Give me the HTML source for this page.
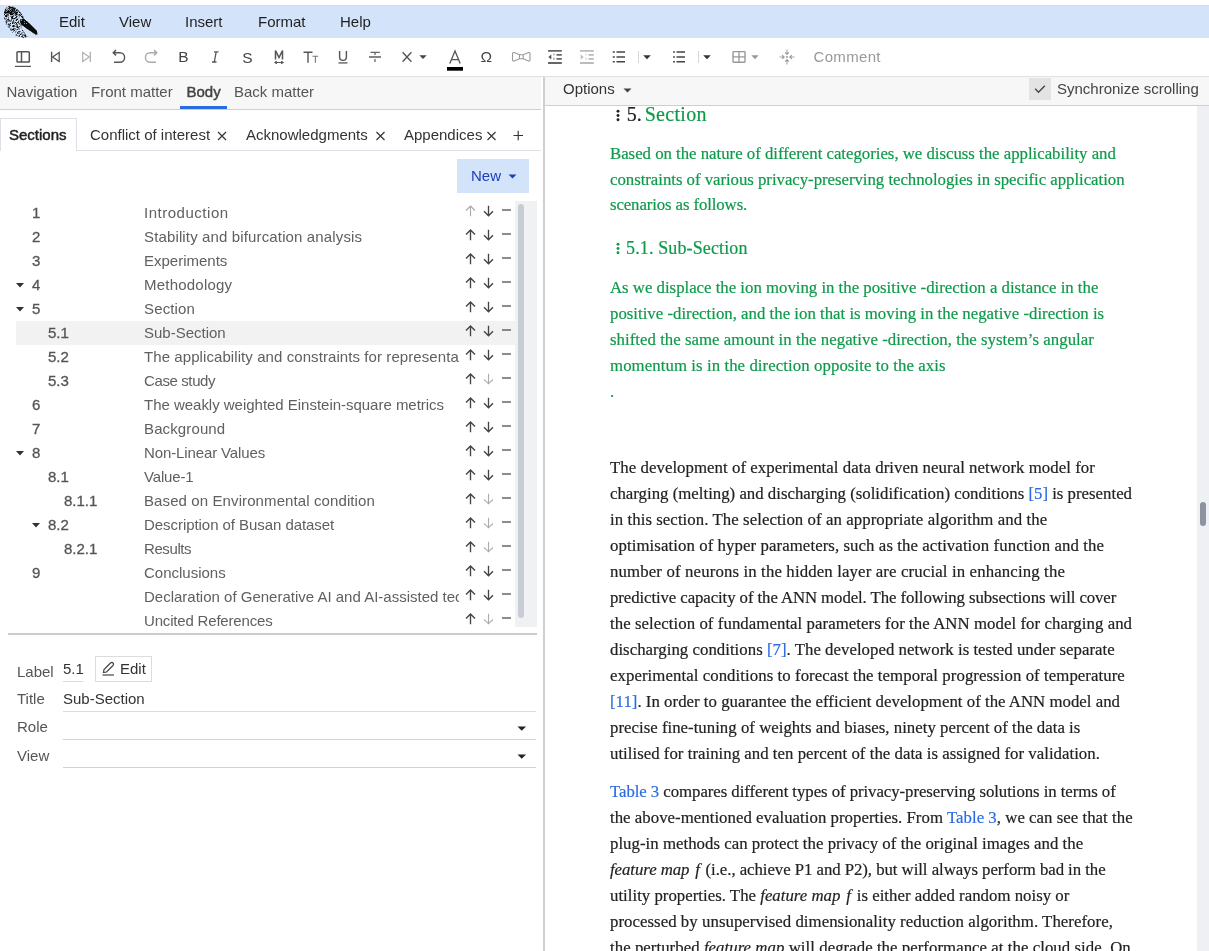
<!DOCTYPE html>
<html><head><meta charset="utf-8">
<style>
*{box-sizing:border-box;margin:0;padding:0}
html,body{width:1209px;height:951px;overflow:hidden;background:#fff}
#left,#right,#menu,#tb{will-change:transform}
body{position:relative;font-family:"Liberation Sans",sans-serif;font-size:15px;color:#333}
.a{position:absolute;white-space:nowrap}
#top{position:absolute;left:0;top:5px;width:1209px;height:1px;background:#d9dcdd}
#menu{position:absolute;left:0;top:6px;width:1209px;height:32px;background:#d3e4fa}
#menu .m{position:absolute;top:-0.5px;line-height:32px;color:#1f1f1f;font-size:15px}
#tb{position:absolute;left:0;top:38px;width:1209px;height:39px;border-bottom:1px solid #dfe1e5;background:#fff}
#left{position:absolute;left:0;top:77px;width:543px;height:874px;background:#fff}
#divider{position:absolute;left:543px;top:77px;width:2px;height:874px;background:#cfcfcf}
#right{position:absolute;left:545px;top:77px;width:664px;height:874px;background:#fff}
#nav{position:absolute;left:0;top:0;width:541px;height:33px;background:#f7f7f7;border-bottom:1px solid #cfcfcf}
#nav .t{position:absolute;top:-1.5px;line-height:32px;color:#555}
#opts{position:absolute;left:0;top:0;width:664px;height:29px;background:#f7f7f7;border-bottom:1px solid #cfcfcf}
.doc{font-family:"Liberation Serif",serif;font-size:16.8px;color:#222;line-height:26px;-webkit-text-stroke:0.2px}
.doc .l{position:absolute;left:65px;white-space:nowrap}
.g{color:#0e9a4a}
.lk{color:#2b6be3}
.row{position:absolute;left:16px;width:500px;height:24px}
.row .n{position:absolute;top:0;line-height:24px;color:#555;font-size:15px;-webkit-text-stroke:0.3px #555}
.row .ti{position:absolute;left:128px;top:0;line-height:24px;color:#606060;width:315px;overflow:hidden;white-space:nowrap}
.row .ic{position:absolute;left:449px;top:3px}
</style></head><body>
<div id="top"></div>
<div id="menu">
  <svg class="a" style="left:0;top:-6px" width="40" height="40" viewBox="0 0 40 40"><path d="M13 6h1v1h-1zM7 7h1v1h-1zM8 7h1v1h-1zM15 7h1v1h-1zM5 8h1v1h-1zM7 8h1v1h-1zM6 9h1v1h-1zM8 9h1v1h-1zM15 9h1v1h-1zM4 10h1v1h-1zM21 13h1v1h-1zM13 14h1v1h-1zM4 15h1v1h-1zM10 15h1v1h-1zM11 15h1v1h-1zM12 15h1v1h-1zM14 15h1v1h-1zM17 15h1v1h-1zM21 15h1v1h-1zM22 15h1v1h-1zM8 16h1v1h-1zM23 16h1v1h-1zM18 17h1v1h-1zM19 17h1v1h-1zM21 17h1v1h-1zM16 18h1v1h-1zM18 18h1v1h-1zM4 19h1v1h-1zM6 19h1v1h-1zM9 19h1v1h-1zM12 19h1v1h-1zM13 19h1v1h-1zM14 19h1v1h-1zM18 20h1v1h-1zM19 20h1v1h-1zM11 21h1v1h-1zM14 21h1v1h-1zM5 22h1v1h-1zM7 22h1v1h-1zM16 22h1v1h-1zM9 23h1v1h-1zM7 24h1v1h-1zM10 24h1v1h-1zM7 26h1v1h-1zM18 26h1v1h-1zM20 26h1v1h-1zM21 26h1v1h-1zM23 26h1v1h-1zM13 27h1v1h-1zM20 27h1v1h-1zM21 27h1v1h-1zM11 28h1v1h-1zM21 28h1v1h-1zM14 29h1v1h-1zM18 29h1v1h-1zM27 29h1v1h-1zM10 30h1v1h-1zM12 30h1v1h-1zM16 30h1v1h-1zM16 31h1v1h-1zM30 31h1v1h-1zM21 32h1v1h-1zM37 32h1v1h-1zM20 33h1v1h-1zM22 33h1v1h-1zM33 33h1v1h-1zM15 34h1v1h-1zM19 34h1v1h-1zM37 34h1v1h-1zM15 35h1v1h-1zM18 35h1v1h-1zM27 36h1v1h-1z" fill="#000" fill-opacity="0.19"/><path d="M10 6h1v1h-1zM12 6h1v1h-1zM6 7h1v1h-1zM14 7h1v1h-1zM6 8h1v1h-1zM10 9h1v1h-1zM7 10h1v1h-1zM9 10h1v1h-1zM15 10h1v1h-1zM6 11h1v1h-1zM16 11h1v1h-1zM17 11h1v1h-1zM19 11h1v1h-1zM13 12h1v1h-1zM4 13h1v1h-1zM7 13h1v1h-1zM14 13h1v1h-1zM17 13h1v1h-1zM6 14h1v1h-1zM14 14h1v1h-1zM18 14h1v1h-1zM20 14h1v1h-1zM16 15h1v1h-1zM18 15h1v1h-1zM7 16h1v1h-1zM10 16h1v1h-1zM17 16h1v1h-1zM19 16h1v1h-1zM4 17h1v1h-1zM6 17h1v1h-1zM23 17h1v1h-1zM5 18h1v1h-1zM6 18h1v1h-1zM8 18h1v1h-1zM17 18h1v1h-1zM22 18h1v1h-1zM5 19h1v1h-1zM7 20h1v1h-1zM10 20h1v1h-1zM15 20h1v1h-1zM21 20h1v1h-1zM5 21h1v1h-1zM7 21h1v1h-1zM8 21h1v1h-1zM9 21h1v1h-1zM12 21h1v1h-1zM24 21h1v1h-1zM27 21h1v1h-1zM14 22h1v1h-1zM28 22h1v1h-1zM8 23h1v1h-1zM13 23h1v1h-1zM18 23h1v1h-1zM20 23h1v1h-1zM24 23h1v1h-1zM26 23h1v1h-1zM6 24h1v1h-1zM15 24h1v1h-1zM19 24h1v1h-1zM20 24h1v1h-1zM8 25h1v1h-1zM12 25h1v1h-1zM16 25h1v1h-1zM20 25h1v1h-1zM21 25h1v1h-1zM8 26h1v1h-1zM15 26h1v1h-1zM8 27h1v1h-1zM16 27h1v1h-1zM10 28h1v1h-1zM15 28h1v1h-1zM19 28h1v1h-1zM15 29h1v1h-1zM16 29h1v1h-1zM19 29h1v1h-1zM13 30h1v1h-1zM13 31h1v1h-1zM15 31h1v1h-1zM20 31h1v1h-1zM23 31h1v1h-1zM12 32h1v1h-1zM15 32h1v1h-1zM18 32h1v1h-1zM19 32h1v1h-1zM22 32h1v1h-1zM23 32h1v1h-1zM24 32h1v1h-1zM19 33h1v1h-1zM24 33h1v1h-1zM37 33h1v1h-1zM21 34h1v1h-1zM22 34h1v1h-1zM23 34h1v1h-1zM24 34h1v1h-1zM17 35h1v1h-1zM23 35h1v1h-1zM18 36h1v1h-1zM24 36h1v1h-1zM22 37h1v1h-1zM25 37h1v1h-1z" fill="#000" fill-opacity="0.38"/><path d="M8 6h1v1h-1zM13 7h1v1h-1zM10 8h1v1h-1zM11 8h1v1h-1zM7 9h1v1h-1zM16 9h1v1h-1zM17 9h1v1h-1zM11 10h1v1h-1zM17 10h1v1h-1zM18 10h1v1h-1zM4 11h1v1h-1zM10 11h1v1h-1zM18 11h1v1h-1zM12 12h1v1h-1zM20 12h1v1h-1zM6 13h1v1h-1zM8 13h1v1h-1zM20 13h1v1h-1zM8 14h1v1h-1zM15 14h1v1h-1zM17 14h1v1h-1zM7 15h1v1h-1zM8 15h1v1h-1zM13 15h1v1h-1zM19 15h1v1h-1zM11 16h1v1h-1zM13 16h1v1h-1zM8 17h1v1h-1zM11 18h1v1h-1zM15 18h1v1h-1zM23 18h1v1h-1zM11 19h1v1h-1zM21 19h1v1h-1zM8 20h1v1h-1zM11 20h1v1h-1zM6 21h1v1h-1zM10 21h1v1h-1zM13 21h1v1h-1zM13 22h1v1h-1zM6 23h1v1h-1zM14 23h1v1h-1zM19 23h1v1h-1zM29 23h1v1h-1zM16 24h1v1h-1zM17 24h1v1h-1zM30 24h1v1h-1zM9 25h1v1h-1zM14 25h1v1h-1zM17 25h1v1h-1zM22 25h1v1h-1zM31 25h1v1h-1zM9 26h1v1h-1zM14 26h1v1h-1zM16 26h1v1h-1zM32 26h1v1h-1zM9 27h1v1h-1zM33 27h1v1h-1zM14 28h1v1h-1zM18 28h1v1h-1zM26 28h1v1h-1zM34 28h1v1h-1zM10 29h1v1h-1zM11 29h1v1h-1zM35 29h1v1h-1zM11 30h1v1h-1zM29 30h1v1h-1zM36 30h1v1h-1zM32 32h1v1h-1zM18 33h1v1h-1zM21 33h1v1h-1zM16 34h1v1h-1zM25 34h1v1h-1zM35 34h1v1h-1zM36 34h1v1h-1zM16 35h1v1h-1zM22 35h1v1h-1zM19 36h1v1h-1zM26 36h1v1h-1z" fill="#000" fill-opacity="0.57"/><path d="M9 6h1v1h-1zM8 8h1v1h-1zM9 8h1v1h-1zM12 8h1v1h-1zM15 8h1v1h-1zM9 9h1v1h-1zM11 9h1v1h-1zM13 9h1v1h-1zM5 10h1v1h-1zM6 10h1v1h-1zM13 10h1v1h-1zM5 11h1v1h-1zM13 11h1v1h-1zM14 11h1v1h-1zM15 11h1v1h-1zM9 12h1v1h-1zM15 12h1v1h-1zM5 13h1v1h-1zM9 13h1v1h-1zM12 13h1v1h-1zM7 14h1v1h-1zM5 15h1v1h-1zM15 15h1v1h-1zM20 15h1v1h-1zM22 16h1v1h-1zM15 17h1v1h-1zM16 17h1v1h-1zM4 18h1v1h-1zM13 18h1v1h-1zM7 19h1v1h-1zM16 19h1v1h-1zM20 19h1v1h-1zM24 19h1v1h-1zM6 20h1v1h-1zM9 20h1v1h-1zM13 20h1v1h-1zM20 20h1v1h-1zM18 21h1v1h-1zM6 22h1v1h-1zM12 22h1v1h-1zM17 22h1v1h-1zM18 22h1v1h-1zM20 22h1v1h-1zM8 24h1v1h-1zM9 24h1v1h-1zM21 24h1v1h-1zM10 25h1v1h-1zM12 26h1v1h-1zM19 26h1v1h-1zM18 27h1v1h-1zM25 27h1v1h-1zM13 28h1v1h-1zM17 29h1v1h-1zM28 29h1v1h-1zM18 31h1v1h-1zM19 31h1v1h-1zM31 31h1v1h-1zM17 32h1v1h-1zM17 33h1v1h-1zM34 33h1v1h-1zM19 35h1v1h-1zM24 35h1v1h-1zM21 36h1v1h-1zM22 36h1v1h-1zM25 36h1v1h-1zM23 37h1v1h-1z" fill="#000" fill-opacity="0.76"/><path d="M9 7h1v1h-1zM10 7h1v1h-1zM11 7h1v1h-1zM12 7h1v1h-1zM13 8h1v1h-1zM14 8h1v1h-1zM5 9h1v1h-1zM12 9h1v1h-1zM14 9h1v1h-1zM8 10h1v1h-1zM10 10h1v1h-1zM12 10h1v1h-1zM14 10h1v1h-1zM16 10h1v1h-1zM7 11h1v1h-1zM8 11h1v1h-1zM9 11h1v1h-1zM11 11h1v1h-1zM12 11h1v1h-1zM4 12h1v1h-1zM5 12h1v1h-1zM6 12h1v1h-1zM7 12h1v1h-1zM8 12h1v1h-1zM10 12h1v1h-1zM11 12h1v1h-1zM14 12h1v1h-1zM16 12h1v1h-1zM17 12h1v1h-1zM19 12h1v1h-1zM10 13h1v1h-1zM11 13h1v1h-1zM13 13h1v1h-1zM15 13h1v1h-1zM16 13h1v1h-1zM4 14h1v1h-1zM10 14h1v1h-1zM11 14h1v1h-1zM12 14h1v1h-1zM16 14h1v1h-1zM19 14h1v1h-1zM21 14h1v1h-1zM6 15h1v1h-1zM5 16h1v1h-1zM6 16h1v1h-1zM12 16h1v1h-1zM16 16h1v1h-1zM21 16h1v1h-1zM11 17h1v1h-1zM12 17h1v1h-1zM22 17h1v1h-1zM12 18h1v1h-1zM14 18h1v1h-1zM8 19h1v1h-1zM17 19h1v1h-1zM22 19h1v1h-1zM23 19h1v1h-1zM16 20h1v1h-1zM22 20h1v1h-1zM23 20h1v1h-1zM24 20h1v1h-1zM25 20h1v1h-1zM20 21h1v1h-1zM21 21h1v1h-1zM22 21h1v1h-1zM23 21h1v1h-1zM25 21h1v1h-1zM26 21h1v1h-1zM15 22h1v1h-1zM21 22h1v1h-1zM22 22h1v1h-1zM23 22h1v1h-1zM24 22h1v1h-1zM25 22h1v1h-1zM26 22h1v1h-1zM27 22h1v1h-1zM10 23h1v1h-1zM12 23h1v1h-1zM16 23h1v1h-1zM21 23h1v1h-1zM22 23h1v1h-1zM23 23h1v1h-1zM25 23h1v1h-1zM27 23h1v1h-1zM28 23h1v1h-1zM22 24h1v1h-1zM23 24h1v1h-1zM24 24h1v1h-1zM25 24h1v1h-1zM26 24h1v1h-1zM27 24h1v1h-1zM28 24h1v1h-1zM29 24h1v1h-1zM13 25h1v1h-1zM23 25h1v1h-1zM24 25h1v1h-1zM25 25h1v1h-1zM26 25h1v1h-1zM27 25h1v1h-1zM28 25h1v1h-1zM29 25h1v1h-1zM30 25h1v1h-1zM13 26h1v1h-1zM17 26h1v1h-1zM24 26h1v1h-1zM25 26h1v1h-1zM26 26h1v1h-1zM27 26h1v1h-1zM28 26h1v1h-1zM29 26h1v1h-1zM30 26h1v1h-1zM31 26h1v1h-1zM17 27h1v1h-1zM26 27h1v1h-1zM27 27h1v1h-1zM28 27h1v1h-1zM29 27h1v1h-1zM30 27h1v1h-1zM31 27h1v1h-1zM32 27h1v1h-1zM27 28h1v1h-1zM28 28h1v1h-1zM29 28h1v1h-1zM30 28h1v1h-1zM31 28h1v1h-1zM32 28h1v1h-1zM33 28h1v1h-1zM12 29h1v1h-1zM13 29h1v1h-1zM29 29h1v1h-1zM30 29h1v1h-1zM31 29h1v1h-1zM32 29h1v1h-1zM33 29h1v1h-1zM34 29h1v1h-1zM14 30h1v1h-1zM22 30h1v1h-1zM30 30h1v1h-1zM31 30h1v1h-1zM32 30h1v1h-1zM33 30h1v1h-1zM34 30h1v1h-1zM35 30h1v1h-1zM32 31h1v1h-1zM33 31h1v1h-1zM34 31h1v1h-1zM35 31h1v1h-1zM36 31h1v1h-1zM33 32h1v1h-1zM34 32h1v1h-1zM35 32h1v1h-1zM36 32h1v1h-1zM35 33h1v1h-1zM36 33h1v1h-1zM20 34h1v1h-1zM25 35h1v1h-1z" fill="#000" fill-opacity="0.95"/></svg>
  <div class="m" style="left:59px">Edit</div>
  <div class="m" style="left:119px">View</div>
  <div class="m" style="left:185px">Insert</div>
  <div class="m" style="left:258px">Format</div>
  <div class="m" style="left:340px">Help</div>
</div>
<div id="tb">
  <svg class="a" style="left:0;top:0" width="900" height="38" viewBox="0 38 900 38">
   <g fill="none" stroke="#555" stroke-width="1.5">
    <rect x="17" y="51.8" width="12.3" height="10.3" rx="0.8"/>
    <path d="M21.5 51.8V62.1"/>
    <path d="M15 66.4H31" stroke-width="1.2"/>
    <path d="M51.6 51.7V62.1" stroke-width="1.4"/>
    <path d="M59.2 52.4V61.6L52.6 57Z" stroke-width="1.3" stroke-linejoin="miter"/>
    <path d="M90.3 51.7V62.1" stroke="#b5b5b5" stroke-width="1.4"/>
    <path d="M82.7 52.4V61.6L89.3 57Z" stroke="#b5b5b5" stroke-width="1.3"/>
    <path d="M114 62.3H119.8A4.8 4.8 0 0 0 119.8 52.7H113.5" stroke-width="1.4"/>
    <path d="M116 50L113.3 52.7L116 55.4" stroke-width="1.5"/>
    <path d="M156 62.3H150.2A4.8 4.8 0 0 1 150.2 52.7H156.5" stroke="#aaa" stroke-width="1.4"/>
    <path d="M154 50L156.7 52.7L154 55.4" stroke="#aaa" stroke-width="1.5"/>
    <path d="M212 62H216.5M214 51.8H218.5M216.2 51.8L214.3 62" stroke-width="1.3"/>
    <path d="M275.5 59.6V50.5L279 57.5L282.5 50.5V59.6" stroke-width="1.5" stroke-linejoin="miter"/>
    <path d="M275.5 62.5H282.5M276.8 61.2L275 62.5L276.8 63.8M281.2 61.2L283 62.5L281.2 63.8" stroke-width="1.2"/>
    <path d="M303.5 52.3H312.5M308 52.3V62.8" stroke-width="1.4"/>
    <path d="M312.5 56.3H318.2M315.4 56.3V62.8" stroke-width="1.1" stroke="#777"/>
    <path d="M339.6 50.9V56.8C339.6 59.3 341 60.4 343 60.4C345 60.4 346.4 59.3 346.4 56.8V50.9" stroke-width="1.4"/>
    <path d="M338.5 62.9H347.5" stroke-width="1.6" stroke="#777"/>
    <path d="M369 57H381" stroke-width="1.6" stroke="#666"/>
    <path d="M370.5 52.4H379.8M375 52.4V55M375 59V62" stroke-width="1.3" stroke="#666"/>
    <path d="M402.6 52.2L411.4 61.8M411.4 52.2L402.6 61.8" stroke-width="1.3"/>
    <path d="M449.8 63.4L455 51L460.2 63.4M451.6 59.6H458.4" stroke-width="1.3"/>
    <path d="M512.5 53.8C512.5 52.8 513.3 52.3 514.2 52.6L519.5 54.8H523.2L528.5 52.6C529.4 52.3 530 52.8 530 53.8V59.8C530 60.8 529.4 61.3 528.5 61L523.2 58.8H519.5L514.2 61C513.3 61.3 512.5 60.8 512.5 59.8Z M519.5 54.8V58.8M523.2 54.8V58.8" stroke="#999" stroke-width="1.1"/>
    <path d="M548 50.9H561.8M556.5 54.8H561.8M556.5 58.9H561.8M548 63H561.8" stroke-width="1.8" stroke="#666"/>
    <path d="M554 53.5V55.5M554 57.5V60" stroke-width="1" stroke="#888"/>
    <path d="M580 50.9H593.8M588.5 54.8H593.8M588.5 58.9H593.8M580 63H593.8" stroke-width="1.8" stroke="#bbb"/>
    <path d="M586 53.5V55.5M586 57.5V60" stroke-width="1" stroke="#ccc"/>
    <path d="M616.5 52H625M616.5 57H625M616.5 61.7H625" stroke-width="1.5" stroke="#444"/>
    <path d="M612.8 52H614.8M612.8 57H614.8M612.8 61.7H614.8" stroke-width="1.5" stroke="#444"/>
    <path d="M638.5 51V63" stroke="#d4d6dc" stroke-width="1"/>
    <path d="M676.5 52H685M676.5 57H685M676.5 61.7H685" stroke-width="1.5" stroke="#444"/>
    <path d="M673 52H675M673 57H675M673 61.7H675" stroke-width="1.5" stroke="#555"/>
    <path d="M698.5 51V63" stroke="#d4d6dc" stroke-width="1"/>
    <rect x="733" y="51.6" width="12" height="10.6" rx="0.6" stroke="#999" stroke-width="1.4"/>
    <path d="M739 51.6V62.2M733 56.9H745" stroke="#999" stroke-width="1.3"/>
    <path d="M787 49.5V54M787 60V64.5M779.5 57H784M790 57H794.5" stroke="#aaa" stroke-width="1.1"/>
    <path d="M785.3 52.4L787 54.2L788.7 52.4M785.3 61.6L787 59.8L788.7 61.6M782.2 55.3L784 57L782.2 58.7M791.8 55.3L790 57L791.8 58.7" stroke="#999" stroke-width="1.3"/>
   </g>
   <path d="M548.3 57L551.3 54.5V59.5Z" fill="#555"/>
   <path d="M583.7 57L580.7 54.5V59.5Z" fill="#bbb"/>
   <rect x="786.2" y="56.2" width="1.6" height="1.6" fill="#888"/>
   <path d="M419.3 55.2H426.7L423 59Z" fill="#444"/>
   <path d="M643.2 55.3H650.8L647 59.2Z" fill="#333"/>
   <path d="M703.2 55.3H710.8L707 59.2Z" fill="#333"/>
   <path d="M751.3 55.3H758.7L755 59.2Z" fill="#999"/>
   <rect x="447" y="67" width="16" height="3.7" fill="#000"/>
   <text x="178.3" y="62.4" font-family="Liberation Sans" font-size="15.5" fill="#444">B</text>
   <text x="242.2" y="62.5" font-family="Liberation Sans" font-size="15.5" fill="#444">S</text>
   <text x="480.6" y="62.4" font-family="Liberation Sans" font-size="15.5" fill="#444">&#937;</text>
   <text x="813.5" y="61.9" font-family="Liberation Sans" font-size="15" fill="#999" letter-spacing="0.33">Comment</text>
  </svg>
</div>
<div id="left">
  <div id="nav">
    <div class="t" style="left:6.5px">Navigation</div>
    <div class="t" style="left:91px">Front matter</div>
    <div class="t" style="left:186.5px;color:#444;-webkit-text-stroke:0.45px #444">Body</div>
    <div class="a" style="left:180px;top:29px;width:47px;height:3px;background:#2a6de0"></div>
    <div class="t" style="left:234px">Back matter</div>
  </div>
  <!-- section tabs -->
  <div class="a" style="left:0;top:73px;width:541px;height:1px;background:#dde0e6"></div>
  <div class="a" style="left:0;top:41px;width:77px;height:33px;border:1px solid #dde0e6;border-bottom:none;background:#fff"></div>
  <div class="a" style="left:9px;top:45.5px;line-height:24px;color:#222;-webkit-text-stroke:0.45px #222">Sections</div>
  <div class="a" style="left:90px;top:45.5px;line-height:24px;color:#333">Conflict of interest</div>
  <div class="a" style="left:246px;top:45.5px;line-height:24px;color:#333">Acknowledgments</div>
  <div class="a" style="left:404px;top:45.5px;line-height:24px;color:#333">Appendices</div>
  <svg class="a" style="left:0;top:40px" width="541" height="30" viewBox="0 0 541 30"><g stroke="#333" stroke-width="1.15" fill="none">
   <path d="M218 15L226 23M226 15L218 23"/>
   <path d="M376.5 15L384.5 23M384.5 15L376.5 23"/>
   <path d="M487.5 15L495.5 23M495.5 15L487.5 23"/>
   <path d="M513.5 18.5H523M518.2 13.8V23.2"/>
  </g></svg>
  <!-- New button -->
  <div class="a" style="left:457px;top:82px;width:72px;height:34px;background:#d3e4fa"></div>
  <div class="a" style="left:471px;top:87px;line-height:24px;color:#1a3fb8">New</div>
  <svg class="a" style="left:508px;top:97px" width="9" height="6"><path d="M0.5 0.5H8.5L4.5 4.5Z" fill="#1a3fb8"/></svg>
  <!-- scrollbar -->
  <div class="a" style="left:515px;top:124px;width:22px;height:426px;background:#f0f1f3"></div>
  <div class="a" style="left:518px;top:127px;width:6px;height:414px;border-radius:3px;background:#c8ccd4"></div>
<div class="row" style="top:124px;"><div class="n" style="left:16px">1</div><div class="ti" style="letter-spacing:0.518px">Introduction</div><svg class="ic" width="70" height="16" viewBox="0 0 70 16"><g fill="none" stroke-width="1.35"><path d="M5.5 2V12.3M1 6.5L5.5 2L10 6.5" stroke="#aaa" stroke-width="1.1"/><path d="M23.5 1.7V11.8M19 7.3L23.5 11.8L28 7.3" stroke="#444" stroke-width="1.35"/><path d="M37 6H46" stroke="#555"/></g></svg></div>
<div class="row" style="top:148px;"><div class="n" style="left:16px">2</div><div class="ti" style="letter-spacing:0.139px">Stability and bifurcation analysis</div><svg class="ic" width="70" height="16" viewBox="0 0 70 16"><g fill="none" stroke-width="1.35"><path d="M5.5 2V12.3M1 6.5L5.5 2L10 6.5" stroke="#444" stroke-width="1.35"/><path d="M23.5 1.7V11.8M19 7.3L23.5 11.8L28 7.3" stroke="#444" stroke-width="1.35"/><path d="M37 6H46" stroke="#555"/></g></svg></div>
<div class="row" style="top:172px;"><div class="n" style="left:16px">3</div><div class="ti">Experiments</div><svg class="ic" width="70" height="16" viewBox="0 0 70 16"><g fill="none" stroke-width="1.35"><path d="M5.5 2V12.3M1 6.5L5.5 2L10 6.5" stroke="#444" stroke-width="1.35"/><path d="M23.5 1.7V11.8M19 7.3L23.5 11.8L28 7.3" stroke="#444" stroke-width="1.35"/><path d="M37 6H46" stroke="#555"/></g></svg></div>
<div class="row" style="top:196px;"><svg class="a" style="left:0px;top:10px" width="8" height="5"><path d="M0 0H8L4 4.5Z" fill="#333"/></svg><div class="n" style="left:16px">4</div><div class="ti" style="letter-spacing:0.220px">Methodology</div><svg class="ic" width="70" height="16" viewBox="0 0 70 16"><g fill="none" stroke-width="1.35"><path d="M5.5 2V12.3M1 6.5L5.5 2L10 6.5" stroke="#444" stroke-width="1.35"/><path d="M23.5 1.7V11.8M19 7.3L23.5 11.8L28 7.3" stroke="#444" stroke-width="1.35"/><path d="M37 6H46" stroke="#555"/></g></svg></div>
<div class="row" style="top:220px;"><svg class="a" style="left:0px;top:10px" width="8" height="5"><path d="M0 0H8L4 4.5Z" fill="#333"/></svg><div class="n" style="left:16px">5</div><div class="ti" style="letter-spacing:0.150px">Section</div><svg class="ic" width="70" height="16" viewBox="0 0 70 16"><g fill="none" stroke-width="1.35"><path d="M5.5 2V12.3M1 6.5L5.5 2L10 6.5" stroke="#444" stroke-width="1.35"/><path d="M23.5 1.7V11.8M19 7.3L23.5 11.8L28 7.3" stroke="#444" stroke-width="1.35"/><path d="M37 6H46" stroke="#555"/></g></svg></div>
<div class="row" style="top:244px;background:#f2f2f2;"><div class="n" style="left:32px">5.1</div><div class="ti">Sub-Section</div><svg class="ic" width="70" height="16" viewBox="0 0 70 16"><g fill="none" stroke-width="1.35"><path d="M5.5 2V12.3M1 6.5L5.5 2L10 6.5" stroke="#444" stroke-width="1.35"/><path d="M23.5 1.7V11.8M19 7.3L23.5 11.8L28 7.3" stroke="#444" stroke-width="1.35"/><path d="M37 6H46" stroke="#555"/></g></svg></div>
<div class="row" style="top:268px;"><div class="n" style="left:32px">5.2</div><div class="ti" style="letter-spacing:0.08px">The applicability and constraints for representation</div><svg class="ic" width="70" height="16" viewBox="0 0 70 16"><g fill="none" stroke-width="1.35"><path d="M5.5 2V12.3M1 6.5L5.5 2L10 6.5" stroke="#444" stroke-width="1.35"/><path d="M23.5 1.7V11.8M19 7.3L23.5 11.8L28 7.3" stroke="#444" stroke-width="1.35"/><path d="M37 6H46" stroke="#555"/></g></svg></div>
<div class="row" style="top:292px;"><div class="n" style="left:32px">5.3</div><div class="ti" style="letter-spacing:-0.389px">Case study</div><svg class="ic" width="70" height="16" viewBox="0 0 70 16"><g fill="none" stroke-width="1.35"><path d="M5.5 2V12.3M1 6.5L5.5 2L10 6.5" stroke="#444" stroke-width="1.35"/><path d="M23.5 1.7V11.8M19 7.3L23.5 11.8L28 7.3" stroke="#aaa" stroke-width="1.1"/><path d="M37 6H46" stroke="#555"/></g></svg></div>
<div class="row" style="top:316px;"><div class="n" style="left:16px">6</div><div class="ti" style="letter-spacing:-0.021px">The weakly weighted Einstein-square metrics</div><svg class="ic" width="70" height="16" viewBox="0 0 70 16"><g fill="none" stroke-width="1.35"><path d="M5.5 2V12.3M1 6.5L5.5 2L10 6.5" stroke="#444" stroke-width="1.35"/><path d="M23.5 1.7V11.8M19 7.3L23.5 11.8L28 7.3" stroke="#444" stroke-width="1.35"/><path d="M37 6H46" stroke="#555"/></g></svg></div>
<div class="row" style="top:340px;"><div class="n" style="left:16px">7</div><div class="ti" style="letter-spacing:0.122px">Background</div><svg class="ic" width="70" height="16" viewBox="0 0 70 16"><g fill="none" stroke-width="1.35"><path d="M5.5 2V12.3M1 6.5L5.5 2L10 6.5" stroke="#444" stroke-width="1.35"/><path d="M23.5 1.7V11.8M19 7.3L23.5 11.8L28 7.3" stroke="#444" stroke-width="1.35"/><path d="M37 6H46" stroke="#555"/></g></svg></div>
<div class="row" style="top:364px;"><svg class="a" style="left:0px;top:10px" width="8" height="5"><path d="M0 0H8L4 4.5Z" fill="#333"/></svg><div class="n" style="left:16px">8</div><div class="ti" style="letter-spacing:-0.119px">Non-Linear Values</div><svg class="ic" width="70" height="16" viewBox="0 0 70 16"><g fill="none" stroke-width="1.35"><path d="M5.5 2V12.3M1 6.5L5.5 2L10 6.5" stroke="#444" stroke-width="1.35"/><path d="M23.5 1.7V11.8M19 7.3L23.5 11.8L28 7.3" stroke="#444" stroke-width="1.35"/><path d="M37 6H46" stroke="#555"/></g></svg></div>
<div class="row" style="top:388px;"><div class="n" style="left:32px">8.1</div><div class="ti" style="letter-spacing:-0.167px">Value-1</div><svg class="ic" width="70" height="16" viewBox="0 0 70 16"><g fill="none" stroke-width="1.35"><path d="M5.5 2V12.3M1 6.5L5.5 2L10 6.5" stroke="#444" stroke-width="1.35"/><path d="M23.5 1.7V11.8M19 7.3L23.5 11.8L28 7.3" stroke="#444" stroke-width="1.35"/><path d="M37 6H46" stroke="#555"/></g></svg></div>
<div class="row" style="top:412px;"><div class="n" style="left:48px">8.1.1</div><div class="ti" style="letter-spacing:0.103px">Based on Environmental condition</div><svg class="ic" width="70" height="16" viewBox="0 0 70 16"><g fill="none" stroke-width="1.35"><path d="M5.5 2V12.3M1 6.5L5.5 2L10 6.5" stroke="#444" stroke-width="1.35"/><path d="M23.5 1.7V11.8M19 7.3L23.5 11.8L28 7.3" stroke="#aaa" stroke-width="1.1"/><path d="M37 6H46" stroke="#555"/></g></svg></div>
<div class="row" style="top:436px;"><svg class="a" style="left:16px;top:10px" width="8" height="5"><path d="M0 0H8L4 4.5Z" fill="#333"/></svg><div class="n" style="left:32px">8.2</div><div class="ti" style="letter-spacing:-0.056px">Description of Busan dataset</div><svg class="ic" width="70" height="16" viewBox="0 0 70 16"><g fill="none" stroke-width="1.35"><path d="M5.5 2V12.3M1 6.5L5.5 2L10 6.5" stroke="#444" stroke-width="1.35"/><path d="M23.5 1.7V11.8M19 7.3L23.5 11.8L28 7.3" stroke="#aaa" stroke-width="1.1"/><path d="M37 6H46" stroke="#555"/></g></svg></div>
<div class="row" style="top:460px;"><div class="n" style="left:48px">8.2.1</div><div class="ti" style="letter-spacing:-0.400px">Results</div><svg class="ic" width="70" height="16" viewBox="0 0 70 16"><g fill="none" stroke-width="1.35"><path d="M5.5 2V12.3M1 6.5L5.5 2L10 6.5" stroke="#444" stroke-width="1.35"/><path d="M23.5 1.7V11.8M19 7.3L23.5 11.8L28 7.3" stroke="#aaa" stroke-width="1.1"/><path d="M37 6H46" stroke="#555"/></g></svg></div>
<div class="row" style="top:484px;"><div class="n" style="left:16px">9</div><div class="ti">Conclusions</div><svg class="ic" width="70" height="16" viewBox="0 0 70 16"><g fill="none" stroke-width="1.35"><path d="M5.5 2V12.3M1 6.5L5.5 2L10 6.5" stroke="#444" stroke-width="1.35"/><path d="M23.5 1.7V11.8M19 7.3L23.5 11.8L28 7.3" stroke="#444" stroke-width="1.35"/><path d="M37 6H46" stroke="#555"/></g></svg></div>
<div class="row" style="top:508px;"><div class="ti">Declaration of Generative AI and AI-assisted technologies</div><svg class="ic" width="70" height="16" viewBox="0 0 70 16"><g fill="none" stroke-width="1.35"><path d="M5.5 2V12.3M1 6.5L5.5 2L10 6.5" stroke="#444" stroke-width="1.35"/><path d="M23.5 1.7V11.8M19 7.3L23.5 11.8L28 7.3" stroke="#444" stroke-width="1.35"/><path d="M37 6H46" stroke="#555"/></g></svg></div>
<div class="row" style="top:532px;"><div class="ti" style="letter-spacing:-0.182px">Uncited References</div><svg class="ic" width="70" height="16" viewBox="0 0 70 16"><g fill="none" stroke-width="1.35"><path d="M5.5 2V12.3M1 6.5L5.5 2L10 6.5" stroke="#444" stroke-width="1.35"/><path d="M23.5 1.7V11.8M19 7.3L23.5 11.8L28 7.3" stroke="#aaa" stroke-width="1.1"/><path d="M37 6H46" stroke="#555"/></g></svg></div>
  <div class="a" style="left:8px;top:556px;width:529px;height:2px;background:#cccccc"></div>
  <!-- form -->
  <div class="a" style="left:17px;top:583px;line-height:24px;color:#555">Label</div>
  <div class="a" style="left:63px;top:580px;line-height:24px;color:#333">5.1</div>
  <div class="a" style="left:63px;top:604px;width:20px;height:1px;background:#d6dbe4"></div>
  <div class="a" style="left:95px;top:579px;width:57px;height:26px;border:1px solid #dcdcdc;background:#fff"></div>
  <svg class="a" style="left:100.5px;top:583px" width="16" height="16" viewBox="0 0 16 16"><g fill="none" stroke="#444" stroke-width="1.2"><path d="M2.5 12.5L3 9.5L9.5 3C10.3 2.2 11.3 2.2 12 3C12.7 3.7 12.7 4.7 12 5.5L5.5 12Z"/><path d="M1.5 15H13"/></g></svg>
  <div class="a" style="left:120px;top:579.5px;line-height:24px;color:#333">Edit</div>
  <div class="a" style="left:17px;top:610px;line-height:24px;color:#555">Title</div>
  <div class="a" style="left:63px;top:610px;line-height:24px;color:#333">Sub-Section</div>
  <div class="a" style="left:63px;top:634px;width:473px;height:1px;background:#d6dbe4"></div>
  <div class="a" style="left:17px;top:638px;line-height:24px;color:#555">Role</div>
  <div class="a" style="left:63px;top:662px;width:473px;height:1px;background:#cfd3d8"></div>
  <svg class="a" style="left:517px;top:649px" width="10" height="6"><path d="M0.5 0.5H9L4.75 4.75Z" fill="#222"/></svg>
  <div class="a" style="left:17px;top:666.5px;line-height:24px;color:#555">View</div>
  <div class="a" style="left:63px;top:690px;width:473px;height:1px;background:#cfd3d8"></div>
  <svg class="a" style="left:517px;top:677px" width="10" height="6"><path d="M0.5 0.5H9L4.75 4.75Z" fill="#222"/></svg>
</div>
<div id="divider"></div>
<div id="right">
  <div id="opts">
    <div class="a" style="left:18px;top:-2.5px;line-height:28px;color:#333">Options</div>
  <div class="a" style="left:484px;top:1px;width:22px;height:22px;background:#e3e3e3"></div>
  <svg class="a" style="left:489px;top:7px" width="12" height="10"><path d="M1.2 4.8L4.5 8.2L10.8 1.8" fill="none" stroke="#444" stroke-width="1.4"/></svg>
  <div class="a" style="left:512px;top:-2px;line-height:28px;color:#444">Synchronize scrolling</div>
  <svg class="a" style="left:78px;top:11px" width="9" height="6"><path d="M0.5 0.5H8.5L4.5 4.5Z" fill="#444"/></svg>
  </div>
  <!-- doc scrollbar -->
  <div class="a" style="left:652px;top:29px;width:12px;height:845px;background:#eff0f3"></div>
  <div class="a" style="left:655px;top:425px;width:6px;height:24px;border-radius:3px;background:#8e949f"></div>
  <div class="doc">
<div class="l" style="top:24.25px;left:81.7px;font-size:20px;word-spacing:-2px"><span style="color:#222">5.</span> <span class="g" style="letter-spacing:0.3px">Section</span></div>
<svg class="a" style="left:71px;top:32px" width="4" height="14"><g fill="#222"><circle cx="2" cy="2.3" r="1.45"/><circle cx="2" cy="6.5" r="1.45"/><circle cx="2" cy="10.7" r="1.45"/></g></svg>
<div class="l g" style="top:63.83px;letter-spacing:-0.011px">Based on the nature of different categories, we discuss the applicability and</div>
<div class="l g" style="top:89.63px;letter-spacing:-0.029px">constraints of various privacy-preserving technologies in specific application</div>
<div class="l g" style="top:115.43px;letter-spacing:-0.105px">scenarios as follows.</div>
<div class="l g" style="top:158.33px;left:81px;font-size:18px;letter-spacing:0.127px">5.1. Sub-Section</div>
<svg class="a" style="left:71px;top:165px" width="4" height="14"><g fill="#0e9a4a"><circle cx="2" cy="2.3" r="1.45"/><circle cx="2" cy="6.5" r="1.45"/><circle cx="2" cy="10.7" r="1.45"/></g></svg>
<div class="l g" style="top:197.83px;letter-spacing:-0.007px">As we displace the ion moving in the positive -direction a distance in the</div>
<div class="l g" style="top:223.83px;letter-spacing:0.008px">positive -direction, and the ion that is moving in the negative -direction is</div>
<div class="l g" style="top:249.83px;letter-spacing:0.035px">shifted the same amount in the negative -direction, the system&#8217;s angular</div>
<div class="l g" style="top:275.83px;letter-spacing:0.075px">momentum is in the direction opposite to the axis</div>
<div class="l g" style="top:301.83px">.</div>
<div class="l" style="top:378.13px;letter-spacing:0.052px">The development of experimental data driven neural network model for</div>
<div class="l" style="top:404.13px;letter-spacing:0.008px">charging (melting) and discharging (solidification) conditions <span class="lk">[5]</span> is presented</div>
<div class="l" style="top:430.13px;letter-spacing:0.069px">in this section. The selection of an appropriate algorithm and the</div>
<div class="l" style="top:456.13px;letter-spacing:0.083px">optimisation of hyper parameters, such as the activation function and the</div>
<div class="l" style="top:482.13px;letter-spacing:0.138px">number of neurons in the hidden layer are crucial in enhancing the</div>
<div class="l" style="top:508.13px;letter-spacing:-0.089px">predictive capacity of the ANN model. The following subsections will cover</div>
<div class="l" style="top:534.13px;letter-spacing:0.063px">the selection of fundamental parameters for the ANN model for charging and</div>
<div class="l" style="top:560.13px;letter-spacing:0.027px">discharging conditions <span class="lk">[7]</span>. The developed network is tested under separate</div>
<div class="l" style="top:586.13px;letter-spacing:0.068px">experimental conditions to forecast the temporal progression of temperature</div>
<div class="l" style="top:612.13px;letter-spacing:0.022px"><span class="lk">[11]</span>. In order to guarantee the efficient development of the ANN model and</div>
<div class="l" style="top:638.13px;letter-spacing:0.021px">precise fine-tuning of weights and biases, ninety percent of the data is</div>
<div class="l" style="top:664.13px;letter-spacing:0.026px">utilised for training and ten percent of the data is assigned for validation.</div>
<div class="l" style="top:701.73px;letter-spacing:-0.059px"><span class="lk">Table 3</span> compares different types of privacy-preserving solutions in terms of</div>
<div class="l" style="top:727.73px;letter-spacing:0.035px">the above-mentioned evaluation properties. From <span class="lk">Table 3</span>, we can see that the</div>
<div class="l" style="top:753.73px;letter-spacing:0.029px">plug-in methods can protect the privacy of the original images and the</div>
<div class="l" style="top:779.73px;letter-spacing:-0.051px"><i>feature map</i> <i style="padding:0 1.6px">f</i> (i.e., achieve P1 and P2), but will always perform bad in the</div>
<div class="l" style="top:805.73px;letter-spacing:0.019px">utility properties. The <i>feature map</i> <i style="padding:0 1.6px">f</i> is either added random noisy or</div>
<div class="l" style="top:831.73px;letter-spacing:0.051px">processed by unsupervised dimensionality reduction algorithm. Therefore,</div>
<div class="l" style="top:857.73px;letter-spacing:0.048px">the perturbed <i>feature map</i> will degrade the performance at the cloud side. On</div>
  </div>
</div>
</body></html>
